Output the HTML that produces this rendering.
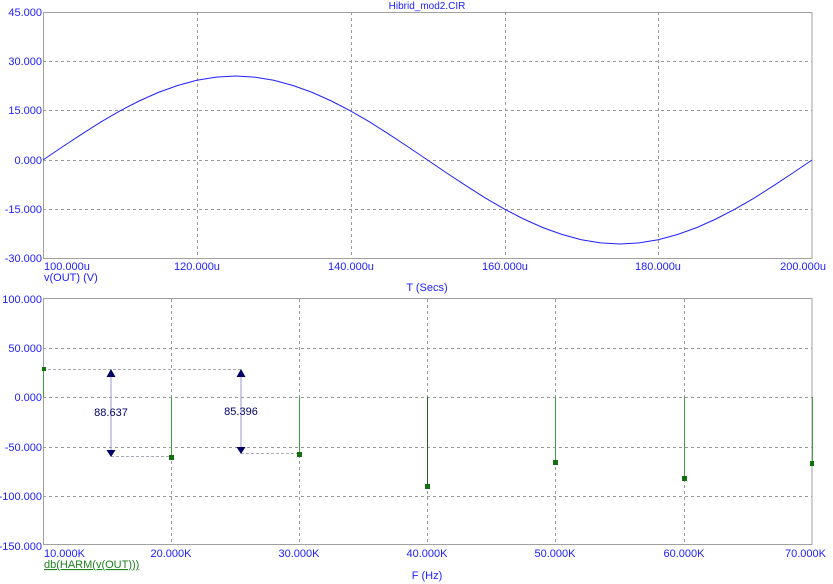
<!DOCTYPE html>
<html><head><style>
html,body{margin:0;padding:0;background:#fff;}
svg{display:block;font-family:"Liberation Sans",sans-serif;}
</style></head><body>
<svg width="833" height="584" viewBox="0 0 833 584" xmlns="http://www.w3.org/2000/svg">
<g font-size="11" fill="#2020ff">
<text x="427" y="9" text-anchor="middle" font-size="10">Hibrid_mod2.CIR</text>
<text x="42" y="16" text-anchor="end">45.000</text>
<text x="42" y="65" text-anchor="end">30.000</text>
<text x="42" y="114" text-anchor="end">15.000</text>
<text x="42" y="164" text-anchor="end">0.000</text>
<text x="42" y="213" text-anchor="end">-15.000</text>
<text x="42" y="262" text-anchor="end">-30.000</text>
<text x="44" y="270">100.000u</text>
<text x="197" y="270" text-anchor="middle">120.000u</text>
<text x="351" y="270" text-anchor="middle">140.000u</text>
<text x="505" y="270" text-anchor="middle">160.000u</text>
<text x="658" y="270" text-anchor="middle">180.000u</text>
<text x="826" y="270" text-anchor="end">200.000u</text>
<text x="44" y="281">v(OUT) (V)</text>
<text x="427" y="291" text-anchor="middle">T (Secs)</text>
<text x="42" y="303" text-anchor="end">100.000</text>
<text x="42" y="352" text-anchor="end">50.000</text>
<text x="42" y="401" text-anchor="end">0.000</text>
<text x="42" y="451" text-anchor="end">-50.000</text>
<text x="42" y="500" text-anchor="end">-100.000</text>
<text x="42" y="550" text-anchor="end">-150.000</text>
<text x="44" y="557">10.000K</text>
<text x="171" y="557" text-anchor="middle">20.000K</text>
<text x="299" y="557" text-anchor="middle">30.000K</text>
<text x="427" y="557" text-anchor="middle">40.000K</text>
<text x="555" y="557" text-anchor="middle">50.000K</text>
<text x="684" y="557" text-anchor="middle">60.000K</text>
<text x="826" y="557" text-anchor="end">70.000K</text>
<text x="427" y="579" text-anchor="middle">F (Hz)</text>
</g>
<text x="44" y="568" font-size="11" fill="#208020" text-decoration="underline">db(HARM(v(OUT)))</text>

<g stroke="#999" stroke-dasharray="3,3" stroke-width="1">
<line x1="43" y1="61.5" x2="812" y2="61.5"/>
<line x1="43" y1="110.5" x2="812" y2="110.5"/>
<line x1="43" y1="160.5" x2="812" y2="160.5"/>
<line x1="43" y1="209.5" x2="812" y2="209.5"/>
<line x1="197.5" y1="12" x2="197.5" y2="258"/>
<line x1="351.5" y1="12" x2="351.5" y2="258"/>
<line x1="505.5" y1="12" x2="505.5" y2="258"/>
<line x1="658.5" y1="12" x2="658.5" y2="258"/>
</g>
<rect x="43.5" y="12.5" width="768.5" height="246" fill="none" stroke="#a0a0a0"/>

<g stroke="#999" stroke-dasharray="3,3" stroke-width="1">
<line x1="43" y1="348.5" x2="812" y2="348.5"/>
<line x1="43" y1="397.5" x2="812" y2="397.5"/>
<line x1="43" y1="447.5" x2="812" y2="447.5"/>
<line x1="43" y1="496.5" x2="812" y2="496.5"/>
<line x1="171.5" y1="299" x2="171.5" y2="545"/>
<line x1="299.5" y1="299" x2="299.5" y2="545"/>
<line x1="427.5" y1="299" x2="427.5" y2="545"/>
<line x1="555.5" y1="299" x2="555.5" y2="545"/>
<line x1="684.5" y1="299" x2="684.5" y2="545"/>
</g>
<rect x="43.5" y="298.5" width="768.5" height="246" fill="none" stroke="#a0a0a0"/>

<polyline fill="none" stroke="#2020ff" stroke-width="1" points="
43,160 62.2,147 81.5,134.3 100.7,122.1 119.9,110.9 139.1,101 158.4,92.4 177.6,85.5 196.8,80.3 216.1,77.1 235.3,76 254.5,77.1 273.7,80.3 293,85.5 312.2,92.4 331.4,101 350.6,110.9 369.9,122.1 389.1,134.3 408.3,147 427.5,160 446.7,173 466,185.7 485.2,197.9 504.4,209.1 523.6,219 542.9,227.6 562.1,234.5 581.3,239.7 600.6,242.9 619.8,244 639,242.9 658.2,239.7 677.5,234.5 696.7,227.6 715.9,219 735.1,209.1 754.4,197.9 773.6,185.7 792.8,173 812,160"/>

<g stroke="#aab" stroke-dasharray="3,2" stroke-width="1">
<line x1="43" y1="369.5" x2="241" y2="369.5"/>
<line x1="111" y1="456.5" x2="171" y2="456.5"/>
<line x1="241" y1="453.5" x2="299" y2="453.5"/>
</g>
<g stroke="#9999cc" stroke-width="1">
<line x1="111" y1="374" x2="111" y2="452"/>
<line x1="241" y1="374" x2="241" y2="449"/>
</g>
<g fill="#000066">
<polygon points="106.5,377 115.5,377 111,369"/>
<polygon points="106.5,450 115.5,450 111,457"/>
<polygon points="236.5,377 245.5,377 241,369"/>
<polygon points="236.5,447 245.5,447 241,454"/>
</g>
<g font-size="11" fill="#000066" text-anchor="middle">
<text x="111" y="416">88.637</text>
<text x="241" y="415">85.396</text>
</g>

<g stroke="#40a040" stroke-width="1">
<line x1="43.5" y1="369" x2="43.5" y2="397"/>
<line x1="171.5" y1="397" x2="171.5" y2="456"/>
<line x1="299.5" y1="397" x2="299.5" y2="454"/>
<line x1="427.5" y1="397" x2="427.5" y2="486" stroke="#206020"/>
<line x1="555.5" y1="397" x2="555.5" y2="462"/>
<line x1="684.5" y1="397" x2="684.5" y2="478"/>
<line x1="812.5" y1="397" x2="812.5" y2="463"/>
</g>
<g fill="#107010">
<rect x="42" y="367" width="4" height="4"/>
<rect x="169" y="455" width="5" height="5"/>
<rect x="297" y="452" width="5" height="5"/>
<rect x="425" y="484" width="5" height="5"/>
<rect x="553" y="460" width="5" height="5"/>
<rect x="682" y="476" width="5" height="5"/>
<rect x="810" y="461" width="4" height="5"/>
</g>
</svg>
</body></html>
